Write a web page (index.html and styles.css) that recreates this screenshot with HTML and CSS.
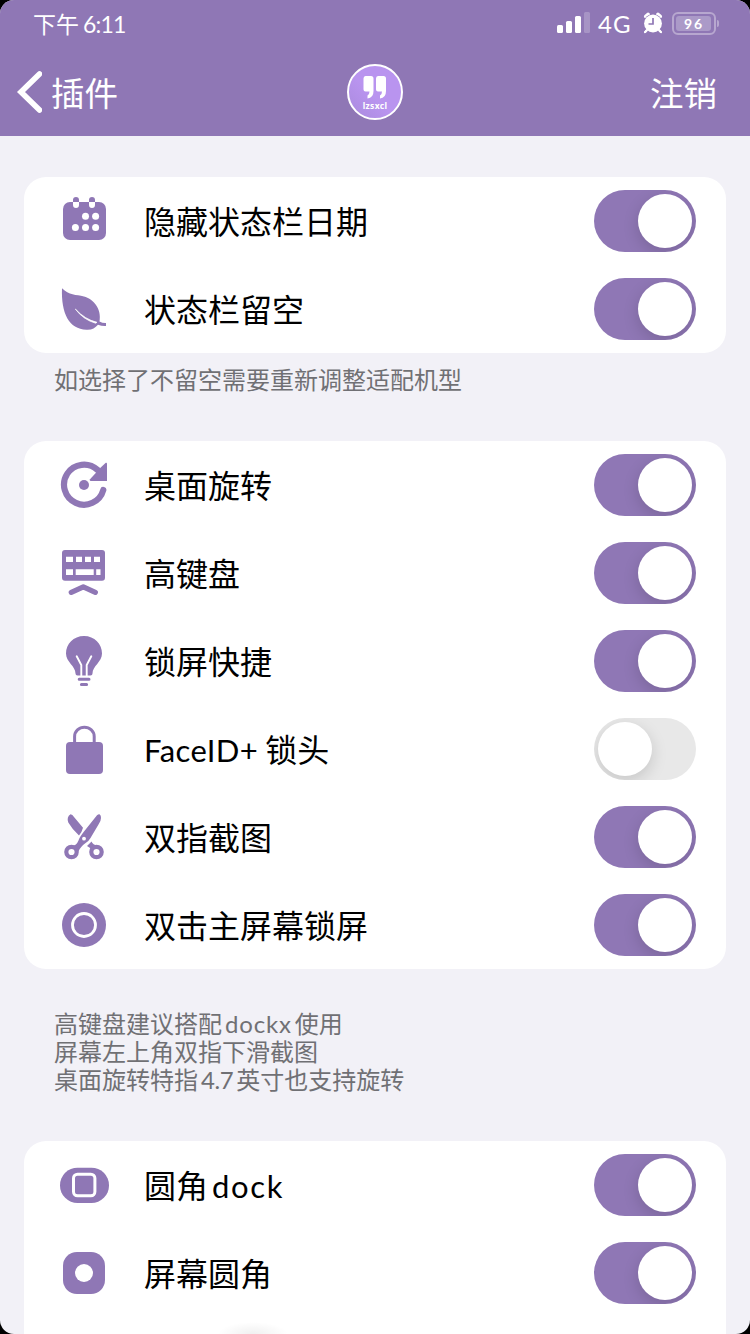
FILE: index.html
```html
<!DOCTYPE html>
<html lang="zh-CN">
<head>
<meta charset="utf-8">
<title>插件</title>
<link rel="stylesheet" href="styles.css">
</head>
<body>
<div class="screen">
  <header class="header">
    <div class="status">
      <div class="time">下午<span class="clock">6:11</span></div>
      <div class="indicators">
        <svg class="signal" width="34" height="22" viewBox="0 0 34 22" fill="#fff"><rect x="0" y="13" width="6" height="8" rx="1.5"/><rect x="9" y="9" width="6" height="12" rx="1.5"/><rect x="18" y="4" width="6" height="17" rx="1.5"/><rect x="27" y="0" width="6" height="21" rx="1.5" opacity=".22"/></svg>
        <span class="network">4G</span>
        <svg class="alarm" width="20" height="22" viewBox="0 0 20 22"><g fill="none" stroke="#fff" stroke-width="4" stroke-linecap="round"><path d="M3 4.500l2-1.800M17 4.500l-2-1.800"/><path d="M4 18l-2 2.200M16 18l2 2.200" stroke-width="2"/></g><circle cx="10" cy="11.500" r="9.600" fill="#8f77b5"/><path d="M4.500 17.500l-2.300 2.500M15.500 17.500l2.300 2.500" stroke="#fff" stroke-width="2" stroke-linecap="round"/><circle cx="10" cy="11.500" r="8.900" fill="#fff"/><path d="M10 6v6H5.500" fill="none" stroke="#8f77b5" stroke-width="1.700"/></svg>
        <div class="battery"><span class="charge">96</span></div>
      </div>
    </div>
    <nav class="nav">
      <div class="back"><svg width="26" height="44" viewBox="0 0 26 44"><path d="M23.500 4L5 22 23.500 40" fill="none" stroke="#fff" stroke-width="5.600" stroke-linecap="round" stroke-linejoin="miter"/></svg><span>插件</span></div>
      <div class="avatar">
        <svg width="24" height="24" viewBox="0 0 24 24" fill="#fff"><path id="quote" d="M2.500 0H8Q10.500 0 10.500 2.500V15Q10.500 22 4.500 22.500V19.500Q6.500 18.500 6.500 15.500H2.500Q.5 15.500.5 13.500V2.500Q.5 0 2.500 0Z"/><use href="#quote" x="12.500"/></svg>
        <span class="nick">lzsxcl</span>
      </div>
      <div class="action">注销</div>
    </nav>
  </header>
  <main class="content">
    <section class="card">
      <div class="row"><svg class="icon" viewBox="0 0 56 56"><rect x="7" y="9" width="43" height="38" rx="7"/><path d="M17 9V7a3 3 0 0 1 6 0v2zM33 9V7a3 3 0 0 1 6 0v2z"/><g fill="#fff"><path d="M17 9v3a3 3 0 0 0 6 0V9zM33 9v3a3 3 0 0 0 6 0V9z"/><circle cx="29.500" cy="23.300" r="3.500"/><circle cx="39.600" cy="23.300" r="3.500"/><circle cx="19.400" cy="34.400" r="3.500"/><circle cx="29.500" cy="34.400" r="3.500"/><circle cx="39.600" cy="34.400" r="3.500"/></g></svg><span class="label">隐藏状态栏日期</span><div class="switch on"></div></div>
      <div class="row"><svg class="icon" viewBox="0 0 56 56"><path d="M6 7.300C13 14.500 20 13.500 28 15.500C37 17.500 46 28 43.500 40.500Q46.500 42.200 50 42V45Q46 45.300 42 43.700C39 47 36 49 30.500 48.700C13 48.500 5 32 6 7.300Z"/><path d="M19.300 28Q29 38.500 41 41.300L39.500 42.200Q27 38.500 19.300 28Z" fill="#fff" stroke="#fff" stroke-width=".7"/></svg><span class="label">状态栏留空</span><div class="switch on"></div></div>
    </section>
    <div class="note">如选择了不留空需要重新调整适配机型</div>
    <section class="card">
      <div class="row"><svg class="icon" viewBox="0 0 56 56"><path d="M47.300 33A20 20 0 1 1 41.500 12.900" fill="none" stroke="#8f77b5" stroke-width="6.200" stroke-linecap="round"/><path d="M34 22.200L45 10.300 49.800 5.800Q51 5.300 51 6.800V24H34.500Q33.200 23.500 34 22.200Z"/><circle cx="28" cy="28" r="5"/></svg><span class="label">桌面旋转</span><div class="switch on"></div></div>
      <div class="row"><svg class="icon" viewBox="0 0 56 56"><rect x="6" y="5" width="43" height="30.700" rx="3"/><path d="M10 11.700h7V17h-7zM20 11.700h6V17h-6zM29 11.700h6V17h-6zM38 11.700h6V17h-6zM10 24.300h7V30h-7zM19.700 24.300h18V30h-18zM40.200 24.300h4.300V30h-4.300z" fill="#fff"/><path d="M15.300 47.300l12-5.500 12 5.500" fill="none" stroke="#8f77b5" stroke-width="5.300" stroke-linecap="round" stroke-linejoin="round"/></svg><span class="label">高键盘</span><div class="switch on"></div></div>
      <div class="row"><svg class="icon" viewBox="0 0 56 56"><path d="M28 3C17.500 3 10 11 10 20.500C10 29 19.500 33 19.500 40.500Q19.500 42.500 21.500 42.500H34.500Q36.500 42.500 36.500 40.500C36.500 33 46 29 46 20.500C46 11 38.500 3 28 3Z"/><path d="M20.700 23.300L25.300 32V43M35.300 23.300L30.700 32V43" fill="none" stroke="#fff" stroke-width="1.900" stroke-linecap="round"/><path d="M23.200 46.200h9.800M25.400 51.400h5.200" stroke="#8f77b5" stroke-width="3" stroke-linecap="round"/></svg><span class="label">锁屏快捷</span><div class="switch on"></div></div>
      <div class="row"><svg class="icon" viewBox="0 0 56 56"><rect x="10" y="21" width="37" height="32" rx="4"/><path d="M18.600 22V15.500a9.800 9.300 0 0 1 19.600 0V22" fill="none" stroke="#8f77b5" stroke-width="3"/></svg><span class="label"><span class="latin face">FaceID+</span>锁头</span><div class="switch"></div></div>
      <div class="row"><svg class="icon" viewBox="0 0 56 56"><path d="M14.500 5.200Q16.500 5.500 18 8L27 18.800Q26 23 23 26.500Q16 20 12.300 13.500Q10.300 8 14.500 5.200Z"/><path d="M35.500 32.500Q37 36 41 36.500L36 41.500Q34 38 31 37Z"/><path d="M41 6.200Q44.700 3.500 45 9Q45 12 42.500 15.500L34.500 29Q33 32 29 34.500Q25 37 22 43L16 37Q20.500 36.500 22.500 31.500Q23.300 28.500 28 22.500Z"/><circle cx="28" cy="29.700" r="1.900" fill="#fff"/><g fill="#fff" stroke="#8f77b5" stroke-width="4.200"><circle cx="15.500" cy="43" r="5.200"/><circle cx="40.500" cy="43" r="5.200"/></g></svg><span class="label">双指截图</span><div class="switch on"></div></div>
      <div class="row"><svg class="icon" viewBox="0 0 56 56"><circle cx="28" cy="28" r="22"/><circle cx="28" cy="28" r="11.500" fill="none" stroke="#fff" stroke-width="2.800"/></svg><span class="label">双击主屏幕锁屏</span><div class="switch on"></div></div>
    </section>
    <div class="note tall">高键盘建议搭配<span class="latin dockx">dockx</span>使用<br>屏幕左上角双指下滑截图<br>桌面旋转特指<span class="latin inch">4.7</span>英寸也支持旋转</div>
    <section class="card">
      <div class="row"><svg class="icon" viewBox="0 0 56 56"><rect x="4" y="10.700" width="49" height="35.300" rx="17.600"/><rect x="17.500" y="17.200" width="21.400" height="21.600" rx="4" fill="none" stroke="#fff" stroke-width="3"/></svg><span class="label">圆角<span class="latin dock">dock</span></span><div class="switch on"></div></div>
      <div class="row"><svg class="icon" viewBox="0 0 56 56"><rect x="7" y="7" width="42" height="42" rx="14"/><circle cx="28" cy="28" r="9" fill="#fff"/></svg><span class="label">屏幕圆角</span><div class="switch on"></div></div>
      <div class="row"></div>
    </section>
  </main>
  <div class="glow"></div>
</div>
</body>
</html>
```
FILE: styles.css
```css
* { box-sizing: border-box; }
body {
  margin: 0;
  background: #000;
  font-family: "Noto Sans CJK SC", sans-serif;
}
.screen {
  position: relative;
  width: 750px;
  height: 1334px;
  overflow: hidden;
  border-radius: 14px;
  background: #f2f1f7;
}
.header {
  height: 136px;
  background: #8f77b5;
  color: #fff;
}
.status {
  display: flex;
  justify-content: space-between;
  align-items: center;
  height: 46px;
  padding: 0 34px 0 33px;
}
.time { display: flex; align-items: center; font-size: 23px; line-height: 30px; }
.clock { margin-left: 4px; padding-top: 2px; font-family: Lato, sans-serif; font-size: 23px; letter-spacing: -.8px; }
.indicators { display: flex; align-items: center; }
.network { width: 38px; margin-left: 7px; padding-top: 1px; font-family: Lato, sans-serif; font-size: 24px; letter-spacing: 1.2px; line-height: 30px; }
.alarm { margin-left: 7px; }
.battery {
  position: relative;
  width: 44px;
  height: 23px;
  margin-left: 9px;
  padding: 2px;
  border: 2px solid #b7a7cf;
  border-radius: 6px;
}
.battery::after {
  content: "";
  position: absolute;
  right: -5px;
  top: 6px;
  width: 2px;
  height: 7px;
  border-radius: 0 2px 2px 0;
  background: #b7a7cf;
}
.charge {
  display: block;
  width: 35px;
  height: 15px;
  padding-left: 1px;
  border-radius: 3px;
  background: #ab9ac8;
  font: bold 14px/15px Lato, sans-serif;
  letter-spacing: 2px;
  text-align: center;
}
.nav {
  display: grid;
  grid-template-columns: 331px 56px 1fr;
  align-items: center;
  height: 92px;
  padding: 0 33px 0 16px;
  font-size: 33.500px;
  line-height: 44px;
}
.back { display: flex; align-items: center; gap: 9px; }
.action { text-align: right; }
.avatar {
  display: flex;
  flex-direction: column;
  align-items: center;
  width: 56px;
  height: 56px;
  padding-top: 10px;
  border: 2px solid #fff;
  border-radius: 50%;
  background: linear-gradient(45deg, #a98add, #b994ef 45%);
}
.nick { margin-top: 1px; font: bold 8.500px/10px "Noto Sans", sans-serif; letter-spacing: .3px; }
.content { padding: 41px 24px 0; }
.header + .content { margin-top: 0; }
.card { border-radius: 22px; background: #fff; }
.row {
  display: flex;
  align-items: center;
  height: 88px;
  padding: 0 30px 0 32px;
}
.icon { flex: none; width: 56px; height: 56px; margin-right: 32px; fill: #8f77b5; }
.label { flex: 1; display: flex; align-items: baseline; padding-bottom: 2px; font-size: 32px; line-height: 44px; color: #000; }
.switch {
  flex: none;
  width: 102px;
  height: 62px;
  padding: 4px;
  overflow: hidden;
  border-radius: 31px;
  background: #e8e8e8;
}
.switch::before {
  content: "";
  display: block;
  width: 54px;
  height: 54px;
  border-radius: 50%;
  background: #fff;
  box-shadow: 0 5px 16px rgba(0, 0, 0, .15);
}
.switch.on { background: #8f77b5; }
.switch.on::before { margin-left: 40px; }
.note {
  height: 88px;
  padding: 12px 30px 0;
  font-size: 24px;
  line-height: 28px;
  color: #707074;
}
.note.tall { height: 172px; padding-top: 40px; }
.latin { font-family: Lato, sans-serif; line-height: 1; }
.face { margin-right: 7px; font-size: 31px; letter-spacing: .4px; }
.dock { margin-left: 4px; font-size: 31px; letter-spacing: 1.7px; }
.dockx { margin: 0 3px; letter-spacing: .8px; }
.inch { margin: 0 3px; letter-spacing: -.4px; }
.glow {
  position: absolute;
  left: 218px;
  bottom: -12px;
  width: 70px;
  height: 24px;
  background: radial-gradient(ellipse closest-side, rgba(0, 0, 0, .06), rgba(0, 0, 0, 0));
}
```
